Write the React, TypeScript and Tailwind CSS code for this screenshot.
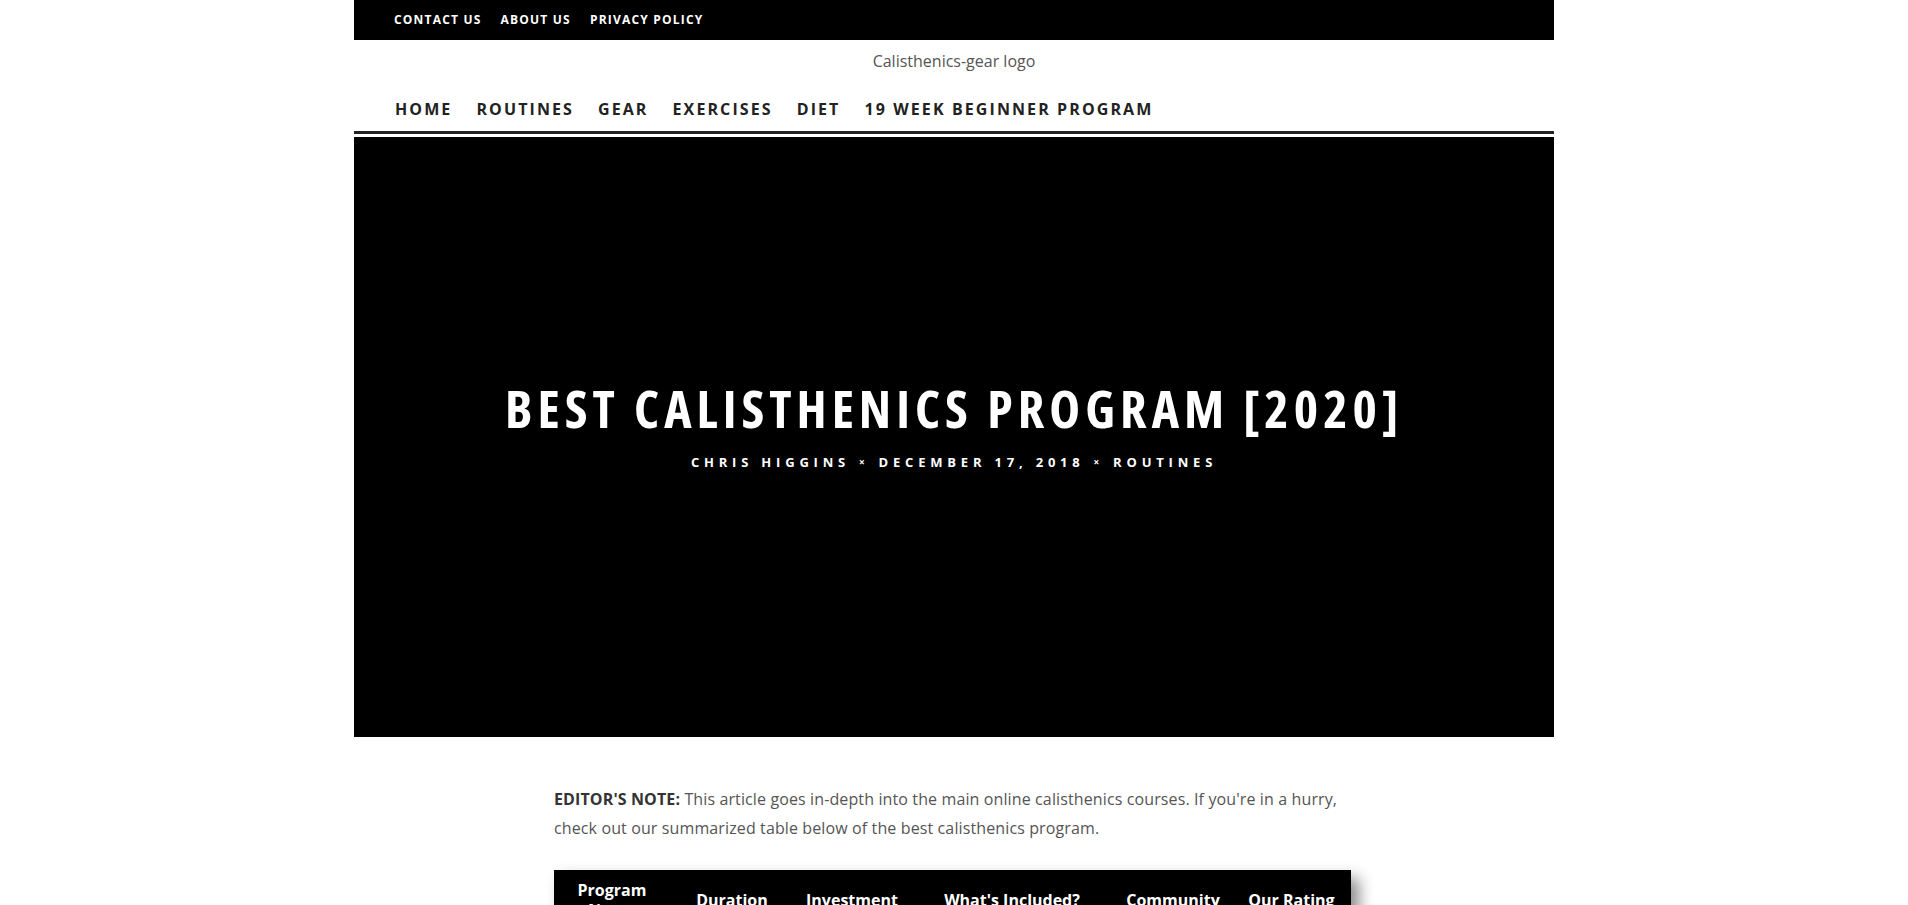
import React from "react";

const font = { fontFamily: '"Open Sans", "Liberation Sans", sans-serif' };

export default function App() {
  const top = ["Contact Us", "About Us", "Privacy Policy"];
  const nav = ["Home", "Routines", "Gear", "Exercises", "Diet", "19 Week Beginner Program"];
  const cols = [
    ["Program", "Name"],
    ["Duration"],
    ["Investment"],
    ["What's Included?"],
    ["Community"],
    ["Our Rating"],
  ];
  return (
    <div className="min-h-screen bg-white" style={font}>
      <div className="mx-auto w-[1200px]">
        <div className="flex h-[40px] items-center gap-[19px] bg-black pl-[40px]">
          {top.map((t) => (
            <a key={t} className="text-[12px] font-bold uppercase tracking-[1.2px] text-white">
              {t}
            </a>
          ))}
        </div>
        <div className="flex h-[42px] items-center justify-center text-[16px] text-[#555]">
          Calisthenics-gear logo
        </div>
        <nav className="flex h-[49px] items-center gap-[24px] pl-[41px] pt-[5px]">
          {nav.map((t) => (
            <a key={t} className="text-[16px] font-bold uppercase tracking-[2.1px] text-[#222]">
              {t}
            </a>
          ))}
        </nav>
        <div className="h-[3px] bg-[#222]" />
        <div className="h-[3px]" />
        <div className="flex h-[600px] flex-col items-center justify-center bg-black pb-[25px]">
          <h1 className="font-stretch-condensed text-[52px] font-bold uppercase leading-[1.2] tracking-[5px] text-white">
            Best Calisthenics Program [2020]
          </h1>
          <div className="mt-[14px] flex items-center gap-[9px] text-[13px] font-bold uppercase tracking-[4.8px] text-white">
            <span>Chris Higgins</span>
            <span className="text-[10px]">×</span>
            <span>December 17, 2018</span>
            <span className="text-[10px]">×</span>
            <span>Routines</span>
          </div>
        </div>
        <div className="mx-auto w-[800px] pt-[48px]">
          <p className="text-[16px] leading-[29px] tracking-[0.12px] text-[#555]">
            <strong className="font-bold text-[#333]">EDITOR'S NOTE:</strong> This article goes in-depth into the main online calisthenics courses. If you're in a hurry, check out our summarized table below of the best calisthenics program.
          </p>
          <div className="mt-[27px] w-[797px] bg-black shadow-[8px_8px_14px_rgba(0,0,0,0.45)]">
            <div className="grid grid-cols-[116px_124px_116px_204px_118px_119px] items-center pt-[10px] pb-[20px]">
              {cols.map((c, i) => (
                <div key={i} className="text-center text-[16px] font-bold leading-[20px] text-white">
                  {c.map((l) => (
                    <div key={l}>{l}</div>
                  ))}
                </div>
              ))}
            </div>
          </div>
        </div>
      </div>
    </div>
  );
}
